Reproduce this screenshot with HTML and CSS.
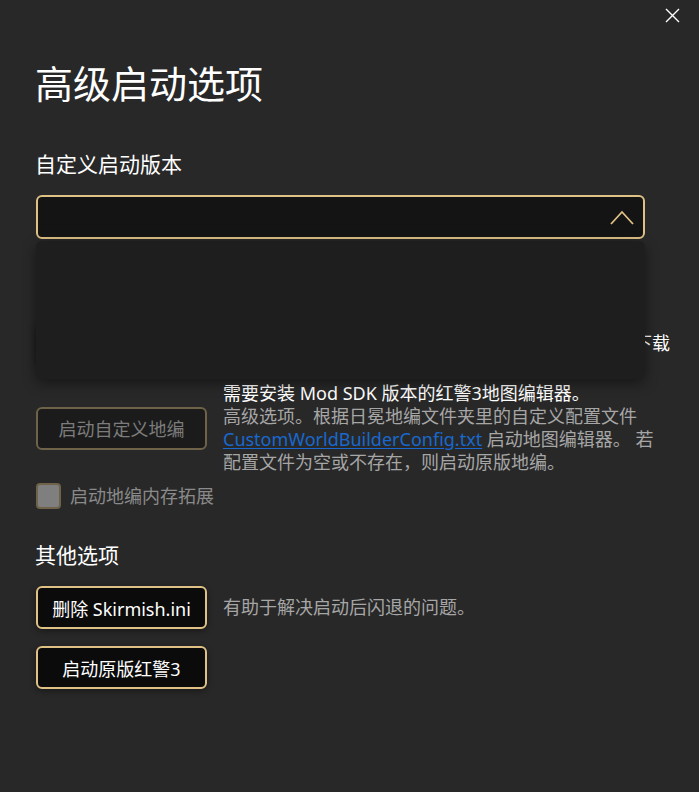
FILE: index.html
```html
<!DOCTYPE html>
<html lang="zh-CN">
<head>
  <meta charset="UTF-8">
  <meta name="viewport" content="width=device-width, initial-scale=1.0">
  <title>高级启动选项</title>
  <link rel="stylesheet" href="styles.css">
</head>
<body>
  <div class="dialog">
    <div class="topbar">
      <button class="close" aria-label="关闭">
        <svg width="15" height="15" viewBox="0 0 15 15"><path d="M1 1 L14 14 M14 1 L1 14" stroke="#ffffff" stroke-width="1.4" fill="none"/></svg>
      </button>
    </div>

    <div class="content">
      <h1 class="title">高级启动选项</h1>

      <h2 class="section-title">自定义启动版本</h2>
      <div class="select-wrap">
        <div class="select">
          <svg class="chevron" width="24" height="15" viewBox="0 0 24 15"><path d="M1 14 L12 2 L23 14" stroke="#dfc185" stroke-width="1.8" fill="none"/></svg>
        </div>
        <div class="select-popup"></div>
      </div>

      <div class="row row-sdk">
        <button class="btn">下载 Mod SDK</button>
        <p class="desc desc-end">未安装时请先前往官网下载</p>
      </div>

      <div class="row row-wb">
        <button class="btn btn-disabled" disabled>启动自定义地编</button>
        <p class="desc">
          <span class="desc-strong">需要安装 Mod SDK 版本的红警3地图编辑器。</span><br>
          高级选项。根据日冕地编文件夹里的自定义配置文件<br>
          <a href="#" class="link">CustomWorldBuilderConfig.txt</a> 启动地图编辑器。 若<br>
          配置文件为空或不存在，则启动原版地编。
        </p>
      </div>

      <label class="check-row">
        <span class="checkbox"></span>
        <span class="check-label">启动地编内存拓展</span>
      </label>

      <h2 class="section-title section-other">其他选项</h2>
      <div class="row row-action">
        <button class="btn">删除 Skirmish.ini</button>
        <p class="desc">有助于解决启动后闪退的问题。</p>
      </div>
      <div class="row row-action">
        <button class="btn">启动原版红警3</button>
      </div>
    </div>
  </div>
</body>
</html>
```

FILE: styles.css
```css
body {
  margin: 0;
  background: #282828;
  color: #ffffff;
  font-family: "Noto Sans", "Noto Sans CJK SC", sans-serif;
  height: 792px;
  overflow: hidden;
}
.dialog {
  display: flex;
  flex-direction: column;
}
.topbar {
  height: 30px;
  display: flex;
  justify-content: flex-end;
  align-items: flex-start;
  padding-right: 19px;
}
.close {
  margin-top: 8px;
  padding: 0;
  border: none;
  background: none;
  width: 15px;
  height: 15px;
  cursor: pointer;
}
.close svg {
  display: block;
}
.content {
  padding: 0 29px 0 35px;
  display: flex;
  flex-direction: column;
  align-items: flex-start;
}
.title {
  margin: 28px 0 0;
  font-size: 38px;
  line-height: 50px;
  font-weight: normal;
}
.section-title {
  margin: 42px 0 0;
  font-size: 21px;
  line-height: 28px;
  font-weight: normal;
}
.select-wrap {
  position: relative;
  margin-top: 17px;
  margin-left: 1px;
  width: 609px;
}
.select {
  box-sizing: border-box;
  height: 44px;
  background: #141414;
  border: 2px solid #dfc185;
  border-radius: 6px;
  display: flex;
  justify-content: flex-end;
  align-items: center;
  padding-right: 9px;
}
.chevron {
  display: block;
}
.select-popup {
  position: absolute;
  top: 46px;
  left: 0;
  width: 100%;
  height: 138px;
  background: #1e1e1e;
  border-radius: 6px;
  box-shadow: 0 4px 14px rgba(0, 0, 0, 0.45);
  z-index: 2;
}
.row {
  display: flex;
  align-items: center;
  gap: 16px;
  margin-left: 1px;
  align-self: stretch;
}
.row-sdk {
  margin-top: 83px;
}
.row-wb {
  margin-top: 17px;
}
.row-action {
  margin-top: 17px;
}
.btn {
  box-sizing: border-box;
  flex: none;
  width: 171px;
  height: 43px;
  padding: 0;
  background: #0b0b0b;
  border: 2px solid #dfc185;
  border-radius: 6px;
  color: #ffffff;
  font-family: inherit;
  font-size: 18px;
  box-shadow: 0 2px 6px rgba(0, 0, 0, 0.4);
  cursor: pointer;
}
.btn-disabled {
  background: #1b1b1b;
  border-color: #6e6248;
  color: #7c7c7c;
  box-shadow: none;
  cursor: default;
}
.desc {
  margin: 0;
  flex: 1;
  font-size: 18px;
  line-height: 23px;
  color: #a6a6a6;
}
.desc-end {
  text-align: right;
  color: #ffffff;
}
.desc-strong {
  color: #ffffff;
}
.link {
  color: #1868cf;
  text-decoration: underline;
  text-underline-offset: 2px;
}
.check-row {
  margin-top: 9px;
  margin-left: 1px;
  display: flex;
  align-items: center;
  gap: 9px;
}
.checkbox {
  box-sizing: border-box;
  width: 25px;
  height: 26px;
  background: #7f7f7f;
  border: 2px solid #6e6248;
  border-radius: 4px;
}
.check-label {
  font-size: 18px;
  line-height: 26px;
  color: #8a8a8a;
}
.section-other {
  margin-top: 32px;
}
```
